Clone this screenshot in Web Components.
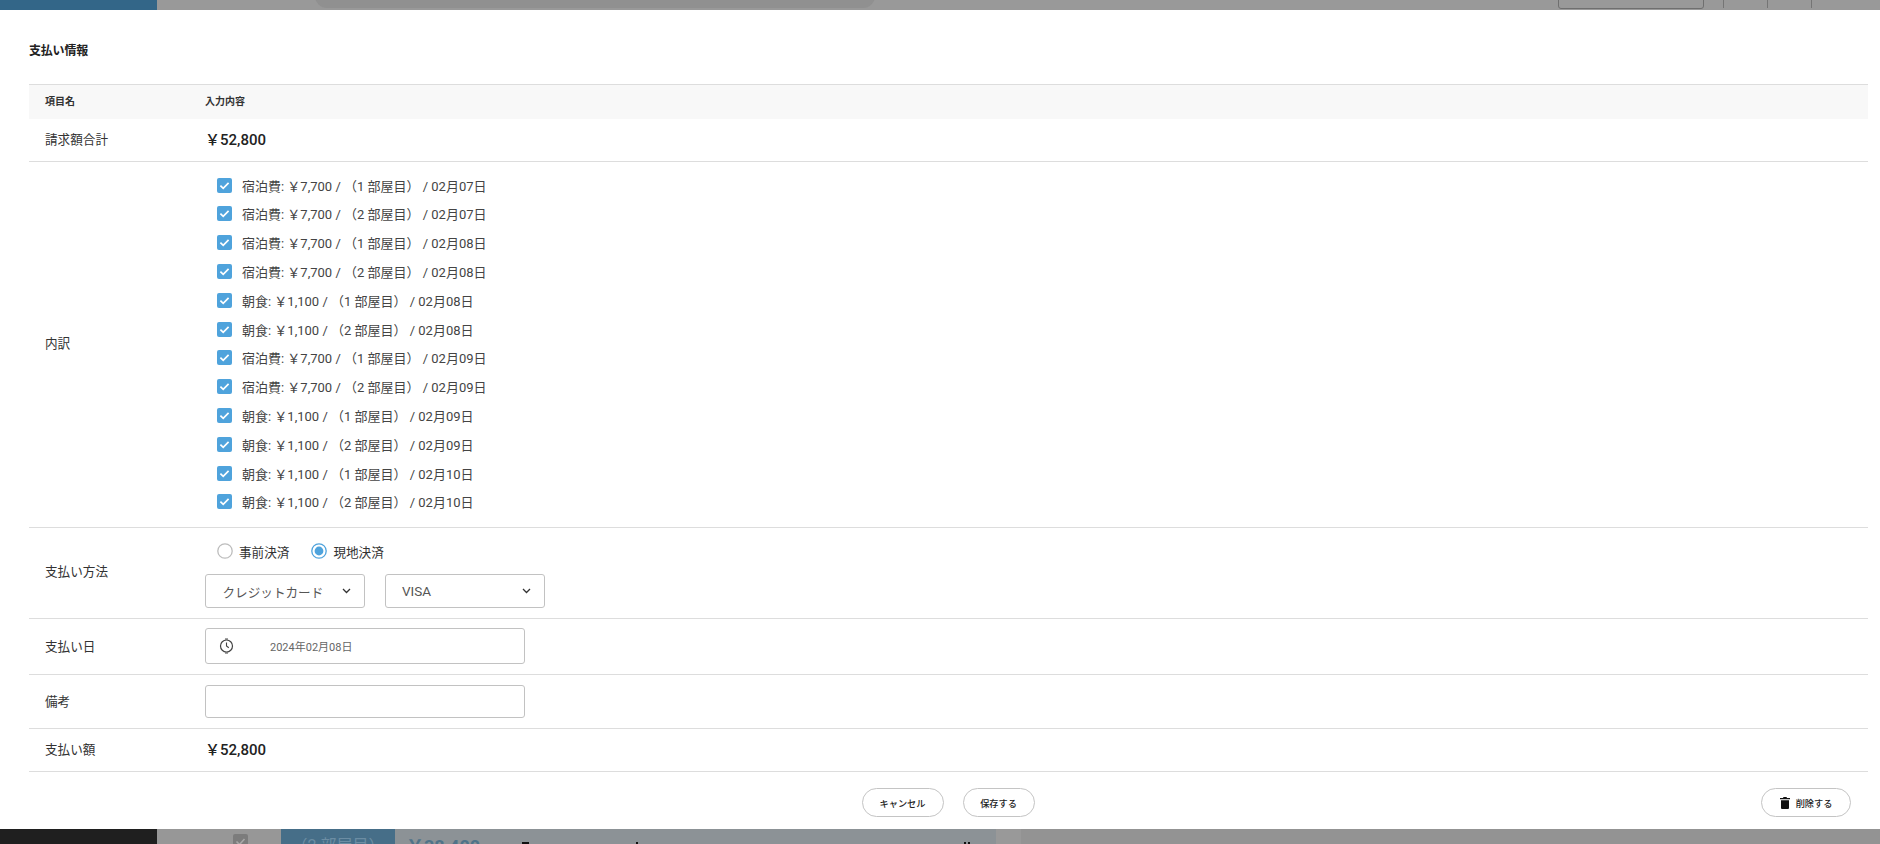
<!DOCTYPE html>
<html lang="ja">
<head>
<meta charset="utf-8">
<title>支払い情報</title>
<style>
html,body{margin:0;padding:0;background:#fff}
body{width:1880px;height:844px;overflow:hidden;display:flex;flex-direction:column;font-family:Roboto,"Noto Sans CJK JP","Liberation Sans",sans-serif;color:#333}
</style>
</head>
<body>
<top-band></top-band>
<pay-modal>
  <pay-row head style="--h:34px;--lb:3px"><span slot="label">項目名</span>入力内容</pay-row>
  <pay-row style="--h:43px;--lb:3px;--ab:3px"><span slot="label">請求額合計</span><pay-amount>￥52,800</pay-amount></pay-row>
  <pay-row style="--h:366px;--lb:4px">
    <span slot="label">内訳</span>
    <check-list>
      <pay-check>宿泊費: ￥7,700 / （1 部屋目） / 02月07日</pay-check>
      <pay-check>宿泊費: ￥7,700 / （2 部屋目） / 02月07日</pay-check>
      <pay-check>宿泊費: ￥7,700 / （1 部屋目） / 02月08日</pay-check>
      <pay-check>宿泊費: ￥7,700 / （2 部屋目） / 02月08日</pay-check>
      <pay-check>朝食: ￥1,100 / （1 部屋目） / 02月08日</pay-check>
      <pay-check>朝食: ￥1,100 / （2 部屋目） / 02月08日</pay-check>
      <pay-check>宿泊費: ￥7,700 / （1 部屋目） / 02月09日</pay-check>
      <pay-check>宿泊費: ￥7,700 / （2 部屋目） / 02月09日</pay-check>
      <pay-check>朝食: ￥1,100 / （1 部屋目） / 02月09日</pay-check>
      <pay-check>朝食: ￥1,100 / （2 部屋目） / 02月09日</pay-check>
      <pay-check>朝食: ￥1,100 / （1 部屋目） / 02月10日</pay-check>
      <pay-check>朝食: ￥1,100 / （2 部屋目） / 02月10日</pay-check>
    </check-list>
  </pay-row>
  <pay-row style="--h:91px;--lb:5px">
    <span slot="label">支払い方法</span>
    <method-field>
      <pay-radio slot="radios">事前決済</pay-radio>
      <pay-radio slot="radios" checked>現地決済</pay-radio>
      <pay-select slot="selects">クレジットカード</pay-select>
      <pay-select slot="selects" style="--fs:13.500px;--pl:16px">VISA</pay-select>
    </method-field>
  </pay-row>
  <pay-row style="--h:56px;--lb:3px"><span slot="label">支払い日</span><pay-input icon h="36" style="--mb:1px">2024年02月08日</pay-input></pay-row>
  <pay-row style="--h:54px"><span slot="label">備考</span><pay-input h="33" style="--mb:1px"></pay-input></pay-row>
  <pay-row style="--h:43px;--lb:4px;--ab:4px"><span slot="label">支払い額</span><pay-amount>￥52,800</pay-amount></pay-row>
  <pay-button slot="center" w="82">キャンセル</pay-button>
  <pay-button slot="center" w="72">保存する</pay-button>
  <pay-button slot="end" w="90" trash>削除する</pay-button>
</pay-modal>
<bottom-band></bottom-band>
<script>
function def(name, html, setup){
  customElements.define(name, class extends HTMLElement{
    constructor(){super();this.attachShadow({mode:'open'}).innerHTML=html;}
    connectedCallback(){if(setup)setup(this,this.shadowRoot);}
  });
}
def('top-band',`<style>
:host{display:flex;height:10px;flex:none;background:#999;overflow:hidden}
.b{width:157px;background:#336688;flex:none}
.g{flex:1;position:relative}
.s{position:absolute;left:158px;width:560px;top:-8px;height:16px;background:#909090;border-radius:0 0 12px 12px}
.i{position:absolute;left:1401px;width:144px;top:-6px;height:13px;border:1px solid #6f6f6f;border-radius:3px}
.v{position:absolute;top:0;height:8px;width:1px;background:#757575}
</style><div class="b"></div><div class="g"><div class="s"></div><div class="i"></div><div class="v" style="left:1566px"></div><div class="v" style="left:1610px"></div><div class="v" style="left:1654px"></div></div>`);
def('bottom-band',`<style>
:host{display:flex;height:15px;flex:none;background:#939393;overflow:hidden;font-family:Roboto,"Noto Sans CJK JP",sans-serif}
.d{width:157px;background:#1f1f1f}
.a{width:124px;background:#979797;position:relative}
.c{position:absolute;left:76px;top:5px;width:15px;height:15px;background:#7c7c7c;border-radius:2px}
.c svg{display:block}
.bl{width:114px;background:#466e88;color:#6c8da3;font-size:16px;text-align:center;line-height:33px;white-space:nowrap}
.m{width:601px;background:#8c9296;color:#4f7389;font-weight:700;font-size:18px;line-height:35px;padding-left:11px;box-sizing:border-box;position:relative}
.x{width:25px;background:#999}
.k{position:absolute;top:13px;height:2px;background:#111}
</style><div class="d"></div><div class="a"><div class="c"><svg width="15" height="15" viewBox="0 0 15 15"><path d="M3.500 7.500l3 3 5-5.500" fill="none" stroke="#a8a8a8" stroke-width="1.600"/></svg></div></div><div class="bl">（2 部屋目）</div><div class="m">￥38,400<div class="k" style="left:127px;width:7px"></div><div class="k" style="left:241px;width:2px"></div><div class="k" style="left:569px;width:2px"></div><div class="k" style="left:573px;width:2px"></div></div><div class="x"></div>`);
def('pay-modal',`<style>
:host{display:flex;flex-direction:column;height:819px;flex:none;background:#fff;padding:0 12px 0 29px;box-sizing:border-box}
h2{margin:0;height:74px;flex:none;display:flex;align-items:center;padding-top:4px;box-sizing:border-box;font-size:12px;font-weight:700;color:#222;letter-spacing:-.2px}
.tb{border-top:1px solid #ddd;flex:none}
.f{display:grid;grid-template-columns:1fr auto 1fr;align-items:center;flex:none;padding:16px 17px 0 0}
.c{grid-column:2;display:flex;gap:19px;padding-left:16px}
.e{grid-column:3;display:flex;justify-content:flex-end}
</style><h2>支払い情報</h2><div class="tb"><slot></slot></div><div class="f"><div class="c"><slot name="center"></slot></div><div class="e"><slot name="end"></slot></div></div>`);
def('pay-row',`<style>
:host{display:grid;grid-template-columns:176px 1fr;align-items:center;height:var(--h);box-sizing:border-box;border-bottom:1px solid #ddd;font-size:12.600px;color:#333}
:host([head]){background:#f8f8f8;border-bottom:0;font-size:10px;font-weight:700;color:#333}
:host([head]) .v{padding-bottom:3px}
.l{padding-left:16px;padding-bottom:var(--lb,2px)}
</style><div class="l"><slot name="label"></slot></div><div class="v"><slot></slot></div>`);
def('pay-amount',`<style>:host{display:block;font-size:15px;font-weight:500;color:#222;padding-bottom:var(--ab,2px)}</style><slot></slot>`);
def('check-list',`<style>:host{display:flex;flex-direction:column;padding-bottom:2px}</style><slot></slot>`);
def('pay-check',`<style>
:host{display:flex;align-items:center;height:28.800px;padding-left:12px;font-size:13px;color:#444;white-space:nowrap}
svg{display:block;flex:none;margin-right:10px}
</style><svg width="15" height="15" viewBox="0 0 15 15"><rect width="15" height="15" rx="2" fill="#4fa3dc"/><path d="M3.400 7.700l2.800 2.700 5.400-5.600" fill="none" stroke="#fff" stroke-width="1.700"/></svg><slot></slot>`);
def('method-field',`<style>
:host{display:flex;flex-direction:column;gap:14px;padding-top:4px}
.r{display:flex;gap:22px;padding-left:12px;height:18px;align-items:center}
.s{display:flex;gap:20px}
</style><div class="r"><slot name="radios"></slot></div><div class="s"><slot name="selects"></slot></div>`);
def('pay-radio',`<style>
:host{display:flex;align-items:center;gap:6px;font-size:12.600px;color:#333;white-space:nowrap}
svg{display:block}
</style><svg width="16" height="16" viewBox="0 0 16 16"></svg><slot></slot>`,(h,r)=>{
  r.querySelector('svg').innerHTML=h.hasAttribute('checked')
   ?'<circle cx="8" cy="8" r="7.200" fill="#fff" stroke="#4fa3dc" stroke-width="1.300"/><circle cx="8" cy="8" r="4.400" fill="#4fa3dc"/>'
   :'<circle cx="8" cy="8" r="7.200" fill="#fff" stroke="#bdbdbd" stroke-width="1.300"/>';
});
def('pay-select',`<style>
:host{display:flex;align-items:center;justify-content:space-between;width:160px;height:34px;box-sizing:border-box;border:1px solid #c2c2c2;border-radius:3px;padding:0 13px 0 var(--pl,16.500px);font-size:var(--fs,12.600px);color:#555;white-space:nowrap}
svg{display:block;flex:none}
</style><slot></slot><svg width="9" height="6" viewBox="0 0 9 6"><path d="M1 1l3.500 3.500L8 1" fill="none" stroke="#333" stroke-width="1.300"/></svg>`);
def('pay-input',`<style>
:host{display:flex;align-items:center;width:320px;box-sizing:border-box;border:1px solid #c2c2c2;border-radius:3px;font-size:11px;color:#666;white-space:nowrap;margin-bottom:var(--mb,0)}
svg{display:block;flex:none;margin:0 36px 0 13px}
</style><slot></slot>`,(h,r)=>{
  h.style.height=h.getAttribute('h')+'px';
  if(h.hasAttribute('icon')&&!r.querySelector('svg')){
    r.querySelector('style').insertAdjacentHTML('afterend','<svg width="15" height="16" viewBox="0 0 15 16"><circle cx="7.500" cy="8" r="6" fill="none" stroke="#444" stroke-width="1.200"/><path d="M7.500 4.500V8l2.300 1.800" fill="none" stroke="#444" stroke-width="1.100"/><path d="M6 1h3M6 15h3" stroke="#444" stroke-width="1"/></svg>');
  }
});
def('pay-button',`<style>
:host{display:flex;align-items:center;justify-content:center;gap:6px;height:29px;box-sizing:border-box;border:1px solid #c4c4c4;border-radius:15px;background:#fff;font-size:9.200px;font-weight:500;color:#222;white-space:nowrap}
svg{display:block;flex:none}
</style><slot></slot>`,(h,r)=>{
  h.style.width=h.getAttribute('w')+'px';
  if(h.hasAttribute('trash')&&!r.querySelector('svg')){
    r.querySelector('style').insertAdjacentHTML('afterend','<svg width="10" height="12" viewBox="0 0 10 12"><path d="M3.500 0h3l.5 1H10v1.300H0V1h3zM1 3.200h8V11a1 1 0 0 1-1 1H2a1 1 0 0 1-1-1z" fill="#111"/></svg>');
  }
});
</script>
</body>
</html>
